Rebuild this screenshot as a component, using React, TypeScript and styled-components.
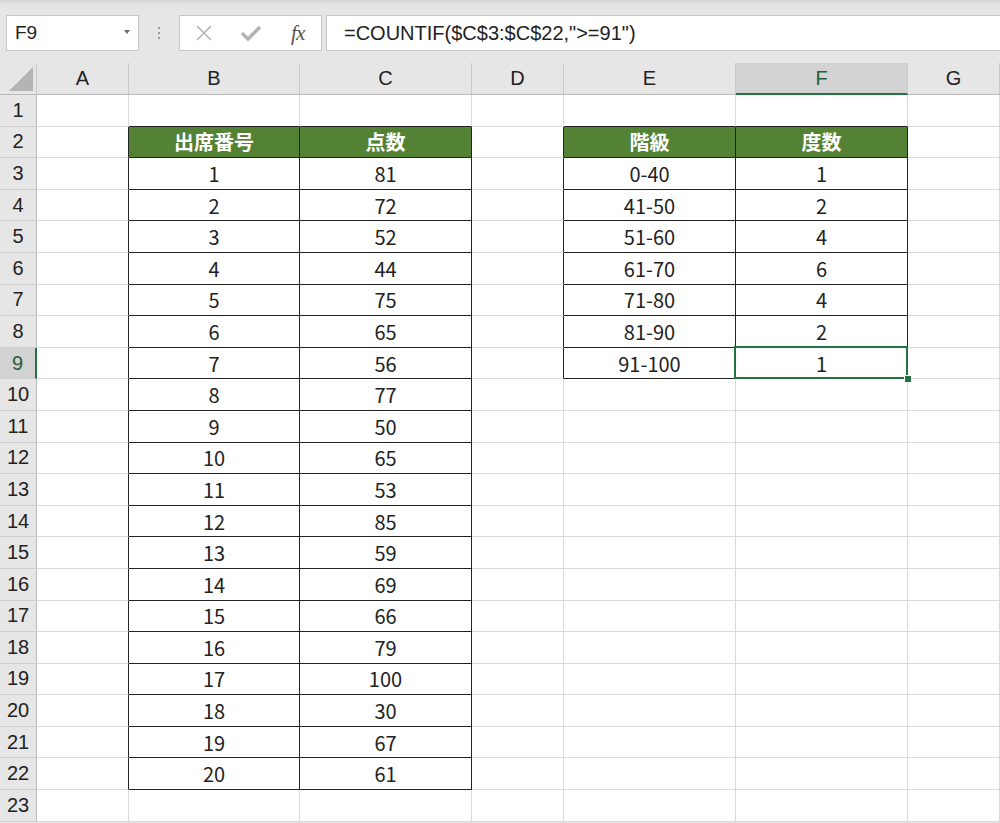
import React from "react";
import styled, { createGlobalStyle } from "styled-components";

const GlobalStyle = createGlobalStyle`
  html, body {
    margin: 0;
    padding: 0;
    background: #e6e6e6;
  }
`;

const COLS = ["A", "B", "C", "D", "E", "F", "G"];
const WIDTHS = "37px 92px 171px 172px 92px 172px 172px 1fr";
const ROW_COUNT = 23;
const SEL = { col: "F", row: 9 };

const scores = [81, 72, 52, 44, 75, 65, 56, 77, 50, 65, 53, 85, 59, 69, 66, 79, 100, 30, 67, 61];
const classes = ["0-40", "41-50", "51-60", "61-70", "71-80", "81-90", "91-100"];
const freqs = [1, 2, 4, 6, 4, 2, 1];

const inTable = (c: string, r: number) =>
  ((c === "B" || c === "C") && r >= 2 && r <= 22) ||
  ((c === "E" || c === "F") && r >= 2 && r <= 9);

const isHead = (c: string, r: number) => r === 2 && inTable(c, r);

const cellValue = (c: string, r: number): string => {
  if (r === 2) {
    return ({ B: "出席番号", C: "点数", E: "階級", F: "度数" } as Record<string, string>)[c] || "";
  }
  if (r >= 3 && r <= 22) {
    if (c === "B") return String(r - 2);
    if (c === "C") return String(scores[r - 3]);
  }
  if (r >= 3 && r <= 9) {
    if (c === "E") return classes[r - 3];
    if (c === "F") return String(freqs[r - 3]);
  }
  return "";
};

const Page = styled.div`
  width: 1000px;
  height: 823px;
  overflow: hidden;
  background: #e6e6e6;
  font-family: "Liberation Sans", Arial, sans-serif;
`;

const Toolbar = styled.div`
  height: 63px;
  box-sizing: border-box;
  display: flex;
  align-items: flex-start;
  padding: 15px 0 0 6px;
  background: linear-gradient(#d3d3d3 0, #e3e3e3 5px, #e6e6e6 10px);
`;

const NameBox = styled.div`
  width: 133px;
  height: 36px;
  box-sizing: border-box;
  background: #fff;
  border: 1px solid #c6c6c6;
  display: flex;
  align-items: center;
  justify-content: space-between;
  padding: 0 8px 0 8px;
  font-size: 19px;
  color: #222;
`;

const Caret = styled.span`
  width: 0;
  height: 0;
  border-left: 3px solid transparent;
  border-right: 3px solid transparent;
  border-top: 4px solid #6e6e6e;
  margin-top: -2px;
`;

const Grip = styled.div`
  width: 40px;
  height: 36px;
  display: flex;
  flex-direction: column;
  align-items: center;
  justify-content: center;
  gap: 3px;
  span {
    width: 2px;
    height: 2px;
    background: #9a9a9a;
  }
`;

const IconBox = styled.div`
  width: 143px;
  height: 36px;
  box-sizing: border-box;
  background: #fff;
  border: 1px solid #c6c6c6;
  display: flex;
  align-items: center;
  padding-left: 1px;
`;

const IconSlot = styled.div`
  width: 48px;
  display: flex;
  justify-content: center;
  align-items: center;
`;

const Fx = styled.span`
  font-family: "Liberation Serif", "Times New Roman", serif;
  font-style: italic;
  font-size: 21px;
  color: #555;
  letter-spacing: -1px;
`;

const FormulaInput = styled.div`
  flex: 1;
  height: 36px;
  margin-left: 4px;
  box-sizing: border-box;
  background: #fff;
  border: 1px solid #c6c6c6;
  border-right: none;
  display: flex;
  align-items: center;
  padding-left: 17px;
  font-size: 20px;
  color: #222;
  white-space: nowrap;
`;

const Sheet = styled.div`
  display: grid;
  grid-template-columns: ${WIDTHS};
  grid-template-rows: 32px repeat(${ROW_COUNT}, 31.6px);
  background: #fff;
`;

const Corner = styled.div`
  background: #e6e6e6;
  border-right: 1px solid #c8c8c8;
  border-bottom: 1px solid #b9b9b9;
  display: flex;
  align-items: flex-end;
  justify-content: flex-end;
  padding: 0 3px 3px 0;
`;

const ColHead = styled.div<{ $sel?: boolean }>`
  background: ${(p) => (p.$sel ? "#d2d2d2" : "#e6e6e6")};
  border-right: 1px solid #c8c8c8;
  border-bottom: ${(p) => (p.$sel ? "2px solid #217346" : "1px solid #b9b9b9")};
  display: flex;
  align-items: center;
  justify-content: center;
  font-size: 20px;
  color: ${(p) => (p.$sel ? "#215e3c" : "#222")};
`;

const RowHead = styled.div<{ $sel?: boolean }>`
  background: ${(p) => (p.$sel ? "#d2d2d2" : "#e6e6e6")};
  border-right: ${(p) => (p.$sel ? "2px solid #217346" : "1px solid #b9b9b9")};
  border-bottom: 1px solid #cfcfcf;
  display: flex;
  align-items: center;
  justify-content: center;
  font-size: 20px;
  color: ${(p) => (p.$sel ? "#215e3c" : "#222")};
`;

const Cell = styled.div<{ $right: string; $bottom: string; $head?: boolean }>`
  position: relative;
  min-width: 0;
  border-right: 1px solid ${(p) => p.$right};
  border-bottom: 1px solid ${(p) => p.$bottom};
  background: ${(p) => (p.$head ? "#548235" : "#fff")};
  color: ${(p) => (p.$head ? "#fff" : "#222")};
  font-family: "Noto Sans CJK JP", "Noto Sans", sans-serif;
  font-weight: ${(p) => (p.$head ? 700 : 400)};
  font-size: 20px;
  display: flex;
  align-items: center;
  justify-content: center;
  line-height: 1;
  padding-top: 1px;
`;

const Selection = styled.div`
  position: absolute;
  top: -2px;
  left: -2px;
  right: -1px;
  bottom: -1px;
  border: 2px solid #217346;
  pointer-events: none;
  z-index: 2;
`;

const FillHandle = styled.div`
  position: absolute;
  right: -5px;
  bottom: -5px;
  width: 6px;
  height: 6px;
  background: #217346;
  border: 1px solid #fff;
  border-right: none;
  border-bottom: none;
`;

const GRID = "#dadada";
const LINE = "#222";

const SheetCell = ({ c, r }: { c: string; r: number }) => {
  const next = COLS[COLS.indexOf(c) + 1];
  const right = inTable(c, r) || (next && inTable(next, r)) ? LINE : GRID;
  const bottom = inTable(c, r) || inTable(c, r + 1) ? LINE : GRID;
  const selected = c === SEL.col && r === SEL.row;
  return (
    <Cell $right={right} $bottom={bottom} $head={isHead(c, r)}>
      {cellValue(c, r)}
      {selected && (
        <Selection>
          <FillHandle />
        </Selection>
      )}
    </Cell>
  );
};

export default function App() {
  const rows = Array.from({ length: ROW_COUNT }, (_, i) => i + 1);
  return (
    <Page>
      <GlobalStyle />
      <Toolbar>
        <NameBox>
          F9
          <Caret />
        </NameBox>
        <Grip>
          <span />
          <span />
          <span />
        </Grip>
        <IconBox>
          <IconSlot>
            <svg width="18" height="18" viewBox="0 0 18 18">
              <path d="M2 2 L16 16 M16 2 L2 16" stroke="#b4b4b4" strokeWidth="1.6" fill="none" />
            </svg>
          </IconSlot>
          <IconSlot>
            <svg width="22" height="18" viewBox="0 0 22 18">
              <path d="M2 9 L8 15 L20 3" stroke="#b4b4b4" strokeWidth="3.4" fill="none" />
            </svg>
          </IconSlot>
          <IconSlot>
            <Fx>fx</Fx>
          </IconSlot>
        </IconBox>
        <FormulaInput>=COUNTIF($C$3:$C$22,"&gt;=91")</FormulaInput>
      </Toolbar>
      <Sheet>
        <Corner>
          <svg width="24" height="24" viewBox="0 0 24 24">
            <path d="M24 0 L24 24 L0 24 Z" fill="#b4b4b4" />
          </svg>
        </Corner>
        {COLS.map((c) => (
          <ColHead key={c} $sel={c === SEL.col}>
            {c}
          </ColHead>
        ))}
        {rows.map((r) => (
          <React.Fragment key={r}>
            <RowHead $sel={r === SEL.row}>{r}</RowHead>
            {COLS.map((c) => (
              <SheetCell key={c} c={c} r={r} />
            ))}
          </React.Fragment>
        ))}
      </Sheet>
    </Page>
  );
}
